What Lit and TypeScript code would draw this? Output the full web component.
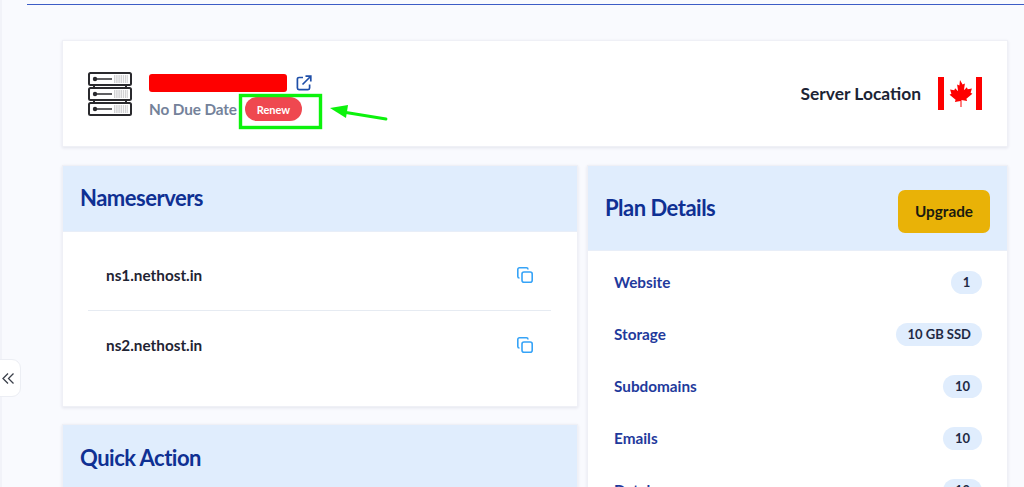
import { LitElement, html, css, svg } from "lit";
import { customElement } from "lit/decorators.js";

const serverUnit = (y: number) => svg`
  <rect x="1" y="${y}" width="42" height="12" rx="1.5" fill="#fff" stroke="#2a2a2e" stroke-width="2"/>
  <circle cx="7" cy="${y + 6}" r="2.2" fill="#2a2a2e"/>
  <path d="M8 ${y + 6}H24" stroke="#2a2a2e" stroke-width="1.5"/>
  <path d="M26 ${y + 3}H40M26 ${y + 5}H40M26 ${y + 7}H40M26 ${y + 9}H40" stroke="#a4a4a8" stroke-width="1" stroke-dasharray="1.4 .8"/>
`;

@customElement("app-root")
export class AppRoot extends LitElement {
  static styles = css`
    :host {
      display: block;
      position: relative;
      height: 487px;
      overflow: hidden;
      background: #f9fafe;
      font-family: Lato, "Liberation Sans", sans-serif;
      color: #1c2434;
    }
    .rail {
      position: absolute;
      left: 0;
      top: 0;
      bottom: 0;
      width: 2px;
      background: #f2f3f9;
    }
    .main {
      margin-left: 27px;
      padding-top: 4px;
    }
    .rule {
      height: 1px;
      background: #3c5cc6;
    }
    .content {
      padding: 35px 16px 0 35px;
      display: flex;
      flex-direction: column;
      gap: 18px;
    }
    .card {
      background: #fff;
      border: 1px solid #eff0f6;
      box-shadow: 0 1px 3px rgba(40, 50, 90, 0.1);
      box-sizing: border-box;
    }
    .top {
      height: 107px;
      display: flex;
      align-items: center;
      justify-content: space-between;
      padding: 0 25px;
    }
    .identity {
      display: flex;
      align-items: center;
      gap: 17px;
    }
    .server {
      width: 44px;
      height: 44px;
      display: block;
      margin-top: 1px;
    }
    .text-block {
      margin-top: 7px;
    }
    .name-row {
      display: flex;
      align-items: center;
      gap: 9px;
      height: 20px;
    }
    .redact {
      width: 138px;
      height: 18px;
      border-radius: 3px;
      background: #fe0000;
    }
    .ext {
      width: 16px;
      height: 16px;
      display: block;
    }
    .due-row {
      display: flex;
      align-items: center;
      gap: 8px;
      margin-top: 4px;
    }
    .due {
      font-size: 15.3px;
      font-weight: 700;
      letter-spacing: -0.1px;
      color: #74829a;
    }
    .renew {
      width: 57px;
      height: 24px;
      display: flex;
      align-items: center;
      justify-content: center;
      border-radius: 12px;
      background: #ef4850;
      color: #fff;
      font-size: 11px;
      font-weight: 700;
    }
    .location {
      display: flex;
      align-items: center;
      gap: 17px;
      font-size: 17.4px;
      font-weight: 700;
    }
    .flag {
      width: 44px;
      height: 33px;
      display: block;
    }
    .columns {
      display: grid;
      grid-template-columns: 516px 421px;
      gap: 9px;
      align-items: start;
    }
    .stack {
      display: flex;
      flex-direction: column;
      gap: 17px;
    }
    .head {
      background: #e0edfd;
      border-bottom: 1px solid #e8eef8;
      box-sizing: border-box;
      display: flex;
      align-items: center;
      justify-content: space-between;
      padding: 0 17px 2px;
      height: 66px;
    }
    .plan-head {
      height: 85px;
    }
    .quick .head {
      padding-bottom: 0;
    }
    h2 {
      margin: 0;
      font-size: 22px;
      font-weight: 700;
      letter-spacing: -0.5px;
      color: #0f3093;
    }
    .upgrade {
      width: 92px;
      height: 43px;
      margin-top: 8px;
      border-radius: 7px;
      background: #e9b207;
      display: flex;
      align-items: center;
      justify-content: center;
      font-size: 15.3px;
      font-weight: 700;
      color: #1a1a10;
    }
    .ns {
      height: 174px;
      padding: 8px 26px 0 25px;
      box-sizing: border-box;
    }
    .ns-row {
      height: 70px;
      box-sizing: border-box;
      display: flex;
      align-items: center;
      justify-content: space-between;
      padding: 0 18px;
      font-size: 15.3px;
      font-weight: 700;
      color: #1f2433;
    }
    .ns-row + .ns-row {
      border-top: 1px solid #e6ebf2;
      padding-bottom: 2px;
    }
    .copy {
      width: 16px;
      height: 16px;
      display: block;
    }
    .quick {
      height: 100px;
    }
    .plan-body {
      padding: 5px 25px 0 26px;
    }
    .plan-row {
      height: 52px;
      display: flex;
      align-items: center;
      justify-content: space-between;
      font-size: 15.3px;
      font-weight: 700;
      color: #1f3a9c;
    }
    .pill {
      min-width: 39px;
      height: 23px;
      padding: 0 11px;
      box-sizing: border-box;
      border-radius: 12px;
      background: #e0edfd;
      display: flex;
      align-items: center;
      justify-content: center;
      font-size: 13px;
      font-weight: 700;
      color: #1f2a44;
    }
    .pill.short {
      min-width: 31px;
    }
    .toggle {
      position: absolute;
      left: -1px;
      top: 359px;
      width: 22px;
      height: 38px;
      box-sizing: border-box;
      background: #fff;
      border: 1px solid #eceef4;
      border-radius: 0 9px 9px 0;
      display: flex;
      align-items: center;
      justify-content: center;
    }
    .toggle svg {
      width: 12px;
      height: 11px;
      display: block;
      margin-right: 5px;
    }
    .markup {
      position: absolute;
      left: 238px;
      top: 93px;
      width: 150px;
      height: 36px;
      display: block;
      overflow: visible;
    }
  `;

  render() {
    const plan: [string, string][] = [
      ["Website", "1"],
      ["Storage", "10 GB SSD"],
      ["Subdomains", "10"],
      ["Emails", "10"],
      ["Databases", "10"],
    ];
    const copy = html`<svg class="copy" viewBox="0 0 16 16" fill="none" stroke="#36a3f7" stroke-width="1.6">
      <rect x="5" y="5" width="10.2" height="10.2" rx="2"/>
      <path d="M11 2.5V2.4A1.6 1.6 0 0 0 9.4.8H2.4A1.6 1.6 0 0 0 .8 2.4v7a1.6 1.6 0 0 0 1.6 1.6h.1"/>
    </svg>`;
    return html`
      <div class="rail"></div>
      <div class="main">
        <div class="rule"></div>
        <div class="content">
          <section class="card top">
            <div class="identity">
              <svg class="server" viewBox="0 0 44 44">
                <path d="M6 13v4M38 13v4M6 27v4M38 27v4" stroke="#2a2a2e" stroke-width="2"/>
                ${serverUnit(1)}${serverUnit(16)}${serverUnit(31)}
              </svg>
              <div class="text-block">
                <div class="name-row">
                  <div class="redact"></div>
                  <svg class="ext" viewBox="0 0 16 16" fill="none" stroke="#1f4fa8" stroke-width="1.7">
                    <path d="M7 2.5H3A1.6 1.6 0 0 0 1.4 4.1V13A1.6 1.6 0 0 0 3 14.6h9A1.6 1.6 0 0 0 13.6 13V9.5"/>
                    <path d="M6.5 9.5 14.5 1.5M9.5 1.2h5.3v5.3"/>
                  </svg>
                </div>
                <div class="due-row">
                  <span class="due">No Due Date</span>
                  <span class="renew">Renew</span>
                </div>
              </div>
            </div>
            <div class="location">
              <span>Server Location</span>
              <svg class="flag" viewBox="0 0 44 33">
                <rect x="0" width="6" height="33" fill="#fe0000"/>
                <rect x="38" width="6" height="33" fill="#fe0000"/>
                <path fill="#fe0000" d="M22 3l2.6 4.6 2.3-1-1 6.7 3-3 .8 2 4.2-.7-1.3 4.2 1.8.9-6 5 .7 2.2-5.6-.8V30h-1v-5.9l-5.6.8.7-2.2-6-5 1.8-.9-1.3-4.2 4.2.7.8-2 3 3-1-6.7 2.3 1z"/>
              </svg>
            </div>
          </section>
          <div class="columns">
            <div class="stack">
              <section class="card">
                <div class="head"><h2>Nameservers</h2></div>
                <div class="ns">
                  <div class="ns-row"><span>ns1.nethost.in</span>${copy}</div>
                  <div class="ns-row"><span>ns2.nethost.in</span>${copy}</div>
                </div>
              </section>
              <section class="card quick">
                <div class="head"><h2>Quick Action</h2></div>
              </section>
            </div>
            <section class="card">
              <div class="head plan-head">
                <h2>Plan Details</h2>
                <div class="upgrade">Upgrade</div>
              </div>
              <div class="plan-body">
                ${plan.map(
                  ([label, value]) => html`<div class="plan-row">
                    <span>${label}</span><span class="pill ${value === "1" ? "short" : ""}">${value}</span>
                  </div>`
                )}
              </div>
            </section>
          </div>
        </div>
      </div>
      <div class="toggle">
        <svg viewBox="0 0 12 11" fill="none" stroke="#3c414b" stroke-width="1.3">
          <path d="M6 .5 1 5.5l5 5M11.5 .5l-5 5 5 5"/>
        </svg>
      </div>
      <svg class="markup" viewBox="0 0 150 36" fill="none">
        <rect x="2.5" y="2.5" width="80" height="32" stroke="#0cf20c" stroke-width="3.4"/>
        <path d="M148 26 108 19.5" stroke="#0cf20c" stroke-width="2.8" stroke-linecap="round"/>
        <path d="M92 15 110 12 108 25z" fill="#0cf20c"/>
      </svg>
    `;
  }
}
